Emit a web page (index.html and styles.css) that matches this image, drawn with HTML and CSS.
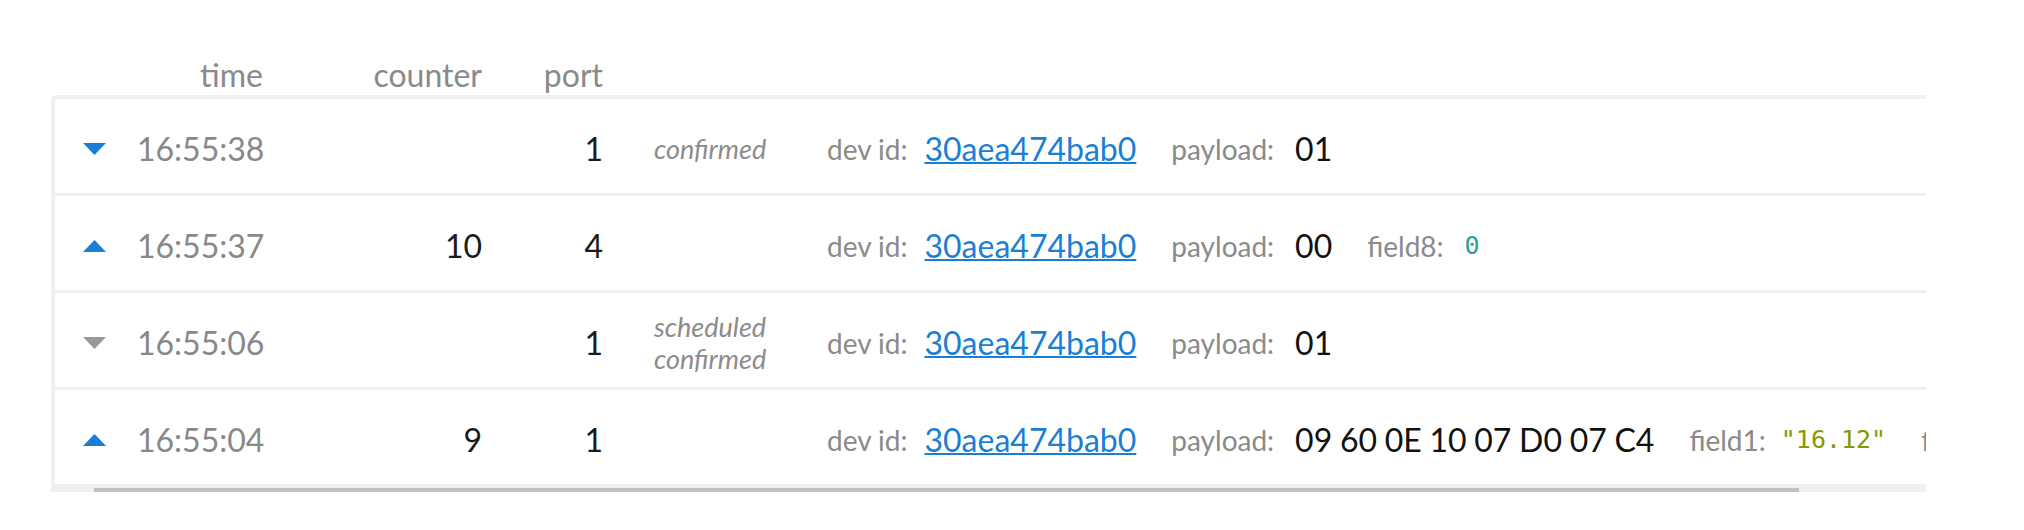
FILE: index.html
```html
<!DOCTYPE html>
<html>
<head>
<meta charset="utf-8">
<link rel="stylesheet" href="styles.css">
</head>
<body>
<div class="page">
  <div class="header">
    <div class="c-arrow"></div>
    <div class="c-time">time</div>
    <div class="c-counter">counter</div>
    <div class="c-port">port</div>
  </div>
  <div class="card">
    <div class="row">
      <div class="c-arrow"><svg class="tri" width="23" height="12" viewBox="0 0 23 12"><polygon points="0,0 23,0 11.5,12" fill="#1a7fd4"/></svg></div>
      <div class="c-time">16:55:38</div>
      <div class="c-counter num"></div>
      <div class="c-port num">1</div>
      <div class="c-status">confirmed</div>
      <div class="details">
        <div class="field"><span class="label">dev id:</span><a class="link" href="#">30aea474bab0</a></div>
        <div class="field wide"><span class="label">payload:</span><span class="value">01</span></div>
      </div>
    </div>
    <div class="row">
      <div class="c-arrow"><svg class="tri" width="23" height="12" viewBox="0 0 23 12"><polygon points="0,12 23,12 11.5,0" fill="#1a7fd4"/></svg></div>
      <div class="c-time">16:55:37</div>
      <div class="c-counter num">10</div>
      <div class="c-port num">4</div>
      <div class="c-status"></div>
      <div class="details">
        <div class="field"><span class="label">dev id:</span><a class="link" href="#">30aea474bab0</a></div>
        <div class="field wide"><span class="label">payload:</span><span class="value">00</span></div>
        <div class="field wide"><span class="label">field8:</span><span class="mono num-val">0</span></div>
      </div>
    </div>
    <div class="row">
      <div class="c-arrow"><svg class="tri" width="23" height="12" viewBox="0 0 23 12"><polygon points="0,0 23,0 11.5,12" fill="#999999"/></svg></div>
      <div class="c-time">16:55:06</div>
      <div class="c-counter num"></div>
      <div class="c-port num">1</div>
      <div class="c-status">scheduled<br>confirmed</div>
      <div class="details">
        <div class="field"><span class="label">dev id:</span><a class="link" href="#">30aea474bab0</a></div>
        <div class="field wide"><span class="label">payload:</span><span class="value">01</span></div>
      </div>
    </div>
    <div class="row">
      <div class="c-arrow"><svg class="tri" width="23" height="12" viewBox="0 0 23 12"><polygon points="0,12 23,12 11.5,0" fill="#1a7fd4"/></svg></div>
      <div class="c-time">16:55:04</div>
      <div class="c-counter num">9</div>
      <div class="c-port num">1</div>
      <div class="c-status"></div>
      <div class="details">
        <div class="field"><span class="label">dev id:</span><a class="link" href="#">30aea474bab0</a></div>
        <div class="field wide"><span class="label">payload:</span><span class="value hex">09 60 0E 10 07 D0 07 C4</span></div>
        <div class="field tight"><span class="label">field1:</span><span class="mono str-val">"16.12"</span></div>
        <div class="field tight"><span class="label">field2:</span><span class="mono str-val">"22.40"</span></div>
      </div>
    </div>
    <div class="scroll"><div class="thumb"></div></div>
  </div>
</div>
</body>
</html>
```
FILE: styles.css
```css
html, body {
  margin: 0;
  padding: 0;
  background: #ffffff;
}

body {
  font-family: Lato, "Noto Sans", sans-serif;
  font-size: 32px;
  color: #888888;
}

.page {
  padding: 56px 0 0 51px;
}

.header {
  display: flex;
  padding-left: 4px;
  height: 38px;
  line-height: 38px;
  margin-bottom: 1px;
  color: #8a8a8a;
  white-space: nowrap;
}

.c-arrow {
  width: 82px;
  flex-shrink: 0;
  display: flex;
  align-items: center;
}

.tri {
  margin-left: 28px;
  display: block;
}

.c-time {
  width: 126px;
  flex-shrink: 0;
  text-align: right;
}

.c-counter {
  width: 219px;
  flex-shrink: 0;
  text-align: right;
}

.c-port {
  width: 121px;
  flex-shrink: 0;
  text-align: right;
}

.num {
  color: #1a1a1a;
}

.c-status {
  width: 224px;
  flex-shrink: 0;
  box-sizing: border-box;
  padding-left: 51px;
  font-style: italic;
  font-size: 27px;
  line-height: 1.15;
  color: #8c8c8c;
}

.card {
  width: 1875px;
  box-sizing: border-box;
  border-top: 4px solid #efefef;
  border-left: 4px solid #efefef;
  border-top-left-radius: 6px;
  overflow: hidden;
}

.row {
  display: flex;
  align-items: center;
  height: 89px;
  padding-top: 5px;
  border-bottom: 3px solid #efefef;
  white-space: nowrap;
}

.row:nth-last-child(2) {
  border-bottom: none;
}

.details {
  display: flex;
  align-items: center;
  gap: 35px;
  flex-shrink: 0;
}

.field {
  display: flex;
  align-items: center;
  gap: 17px;
  flex-shrink: 0;
}

.field.wide {
  gap: 21px;
}

.field.tight {
  gap: 15px;
}

.label {
  font-size: 28px;
  color: #8a8a8a;
}

.value {
  color: #111111;
}

.hex {
  word-spacing: -0.5px;
}

.link {
  color: #1a7fd4;
  text-decoration: underline;
  text-decoration-thickness: 2px;
}

.mono {
  font-family: "DejaVu Sans Mono", "Liberation Mono", monospace;
  font-size: 25px;
}

.num-val {
  color: #2aa198;
}

.str-val {
  color: #859900;
}

.scroll {
  height: 8px;
  background: #f0f0f0;
  display: flex;
  align-items: flex-end;
}

.thumb {
  margin-left: 39px;
  width: 1705px;
  height: 4px;
  background: #c1c1c1;
}
```
